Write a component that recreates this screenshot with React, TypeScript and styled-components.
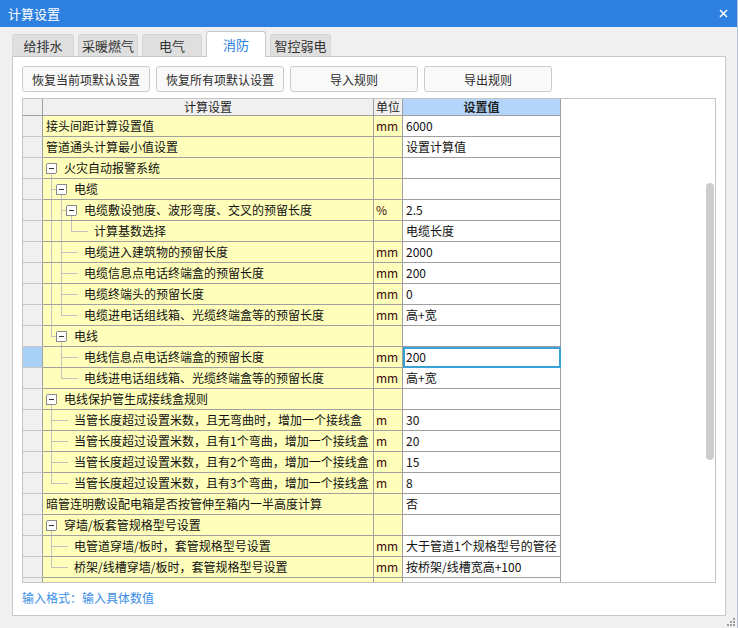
import React from 'react';
import styled, { createGlobalStyle } from 'styled-components';

const GlobalStyle = createGlobalStyle`
  html, body { margin: 0; padding: 0; background: #f0f0f0; }
  body { font-family: "Noto Sans CJK SC", "Noto Sans", sans-serif; font-size: 12px; color: #1a1a1a; }
  * { box-sizing: border-box; }
`;

type Node = {
  name: string;
  unit?: string;
  value?: string;
  plain?: boolean;
  selected?: boolean;
  children?: Node[];
};

type FlatRow = Node & {
  level: number;
  isLast: boolean;
  guides: boolean[];
  hasChildren: boolean;
};

const tree: Node[] = [
  { name: '接头间距计算设置值', unit: 'mm', value: '6000', plain: true },
  { name: '管道通头计算最小值设置', value: '设置计算值', plain: true },
  {
    name: '火灾自动报警系统',
    children: [
      {
        name: '电缆',
        children: [
          {
            name: '电缆敷设弛度、波形弯度、交叉的预留长度',
            unit: '%',
            value: '2.5',
            children: [{ name: '计算基数选择', value: '电缆长度' }],
          },
          { name: '电缆进入建筑物的预留长度', unit: 'mm', value: '2000' },
          { name: '电缆信息点电话终端盒的预留长度', unit: 'mm', value: '200' },
          { name: '电缆终端头的预留长度', unit: 'mm', value: '0' },
          { name: '电缆进电话组线箱、光缆终端盒等的预留长度', unit: 'mm', value: '高+宽' },
        ],
      },
      {
        name: '电线',
        children: [
          { name: '电线信息点电话终端盒的预留长度', unit: 'mm', value: '200', selected: true },
          { name: '电线进电话组线箱、光缆终端盒等的预留长度', unit: 'mm', value: '高+宽' },
        ],
      },
    ],
  },
  {
    name: '电线保护管生成接线盒规则',
    children: [
      { name: '当管长度超过设置米数，且无弯曲时，增加一个接线盒', unit: 'm', value: '30' },
      { name: '当管长度超过设置米数，且有1个弯曲，增加一个接线盒', unit: 'm', value: '20' },
      { name: '当管长度超过设置米数，且有2个弯曲，增加一个接线盒', unit: 'm', value: '15' },
      { name: '当管长度超过设置米数，且有3个弯曲，增加一个接线盒', unit: 'm', value: '8' },
    ],
  },
  { name: '暗管连明敷设配电箱是否按管伸至箱内一半高度计算', value: '否', plain: true },
  {
    name: '穿墙/板套管规格型号设置',
    children: [
      { name: '电管道穿墙/板时，套管规格型号设置', unit: 'mm', value: '大于管道1个规格型号的管径' },
      { name: '桥架/线槽穿墙/板时，套管规格型号设置', unit: 'mm', value: '按桥架/线槽宽高+100' },
    ],
  },
  { name: '', plain: true },
];

function flatten(nodes: Node[], level: number, guides: boolean[], out: FlatRow[]) {
  nodes.forEach((n, i) => {
    const isLast = i === nodes.length - 1;
    out.push({ ...n, level, isLast, guides: [...guides], hasChildren: !!n.children });
    if (n.children) flatten(n.children, level + 1, [...guides, !isLast], out);
  });
  return out;
}

const rows = flatten(tree, 0, [], []);

/* ---------- window chrome ---------- */

const Window = styled.div`
  width: 738px;
  height: 628px;
  overflow: hidden;
  display: flex;
  flex-direction: column;
  background: #f0f0f0;
  border-right: 1px solid #b3c3d8;
`;

const TitleBar = styled.div`
  height: 27px;
  flex: none;
  background: #2e80e0;
  color: #fff;
  display: flex;
  align-items: center;
  justify-content: space-between;
  padding: 0 9px 0 8px;
  font-size: 13px;
`;

const CloseButton = styled.span`
  display: flex;
  width: 9px;
  height: 9px;
`;

const TabStrip = styled.div`
  display: flex;
  align-items: flex-end;
  gap: 4px;
  height: 26px;
  margin-top: 4px;
  padding-left: 12px;
  flex: none;
`;

const Tab = styled.div<{ $active?: boolean; $w: number }>`
  width: ${(p) => p.$w}px;
  height: ${(p) => (p.$active ? 26 : 23)}px;
  display: flex;
  align-items: center;
  justify-content: center;
  padding-bottom: ${(p) => (p.$active ? 1 : 1)}px;
  font-size: 13px;
  border: 1px solid ${(p) => (p.$active ? '#c4c8ce' : '#d6d6d6')};
  border-bottom: none;
  border-radius: 3px 3px 0 0;
  background: ${(p) => (p.$active ? '#ffffff' : '#dfdfdf')};
  color: ${(p) => (p.$active ? '#2e80e0' : '#333')};
  position: relative;
  z-index: ${(p) => (p.$active ? 2 : 0)};
`;

const Panel = styled.div`
  position: relative;
  margin: -1px 0 0 12px;
  width: 714px;
  height: 560px;
  flex: none;
  background: #fff;
  border: 1px solid #c8c8c8;
  padding: 9px 0 0 9px;
  display: flex;
  flex-direction: column;
`;

const ButtonRow = styled.div`
  display: flex;
  gap: 6px;
  height: 26px;
`;

const ActionButton = styled.button`
  width: 128px;
  height: 26px;
  border: 1px solid #c9ccd2;
  border-radius: 3px;
  background: #f9f9f9;
  color: #2a2a2a;
  font-family: inherit;
  font-size: 12px;
  padding: 0;
  display: flex;
  align-items: center;
  justify-content: center;
`;

/* ---------- grid ---------- */

const Grid = styled.div`
  margin-top: 6px;
  width: 694px;
  height: 485px;
  border: 1px solid #c4c4c4;
  background: #fff;
  display: flex;
  overflow: hidden;
`;

const Table = styled.div`
  flex: none;
  width: 538px;
  display: flex;
  flex-direction: column;
`;

const Spacer = styled.div`
  flex: 1;
`;

const ScrollTrack = styled.div`
  flex: none;
  width: 9px;
  padding-top: 84px;
`;

const Thumb = styled.div`
  width: 8px;
  height: 277px;
  border-radius: 4px;
  background: #cdcdcd;
`;

const cols = '20px 331px 29px 158px';

const HeaderRow = styled.div`
  display: grid;
  grid-template-columns: ${cols};
  height: 17px;
  flex: none;
`;

const HeaderCell = styled.div<{ $accent?: boolean }>`
  border-right: 1px solid #a0a0a0;
  border-bottom: 1px solid #a0a0a0;
  background: ${(p) => (p.$accent ? '#b2d5f9' : '#f0f0f0')};
  font-weight: ${(p) => (p.$accent ? 700 : 400)};
  color: #1f1f1f;
  display: flex;
  align-items: center;
  justify-content: center;
  line-height: 16px;
  white-space: nowrap;
  overflow: hidden;
`;

const Row = styled.div`
  display: grid;
  grid-template-columns: ${cols};
  height: 21px;
  flex: none;
`;

const RowHead = styled.div<{ $selected?: boolean }>`
  border-right: 1px solid #a0a0a0;
  border-bottom: 1px solid #c6c6c6;
  background: ${(p) => (p.$selected ? '#a9d0f7' : '#f0f0f0')};
`;

const NameCell = styled.div`
  border-right: 1px solid #a0a0a0;
  border-bottom: 1px solid #a0a0a0;
  background: #ffffbb;
  display: flex;
  align-items: center;
  white-space: nowrap;
  overflow: hidden;
`;

const PlainPad = styled.span`
  width: 3px;
  flex: none;
`;

const NameText = styled.span`
  line-height: 20px;
  color: #111;
`;

const UnitCell = styled.div`
  border-right: 1px solid #a0a0a0;
  border-bottom: 1px solid #a0a0a0;
  background: #ffffbb;
  padding-left: 2px;
  line-height: 20px;
  color: #3c0a0a;
  white-space: nowrap;
  overflow: hidden;
`;

const ValueCell = styled.div<{ $selected?: boolean }>`
  border-right: 1px solid #a0a0a0;
  border-bottom: 1px solid #a0a0a0;
  background: #fff;
  padding-left: 3px;
  line-height: 20px;
  color: #111;
  white-space: nowrap;
  overflow: hidden;
  outline: ${(p) => (p.$selected ? '2px solid #38a2d6' : 'none')};
  outline-offset: -2px;
`;

const Footer = styled.div`
  margin-top: 7px;
  line-height: 16px;
  color: #3a8de6;
  font-size: 12px;
`;

const GripRow = styled.div`
  display: flex;
  justify-content: flex-end;
  padding: 2px 2px 0 0;
`;

/* ---------- drawings ---------- */

const LINE = '#c2c2c2';

function TreeGuide({ row }: { row: FlatRow }) {
  const L = row.level;
  const textX = 21 + 10 * L;
  const parts: React.ReactNode[] = [];
  for (let j = 1; j < L; j++) {
    if (row.guides[j]) {
      const c = 8 + 10 * (j - 1) + 0.5;
      parts.push(<line key={`g${j}`} x1={c} y1={0} x2={c} y2={20} stroke={LINE} />);
    }
  }
  if (L >= 1) {
    const pc = 8 + 10 * (L - 1) + 0.5;
    parts.push(<line key="pv" x1={pc} y1={0} x2={pc} y2={row.isLast ? 11 : 20} stroke={LINE} />);
    const end = row.hasChildren ? 3 + 10 * L : textX - 6;
    parts.push(<line key="ph" x1={pc} y1={10.5} x2={end} y2={10.5} stroke={LINE} />);
  }
  if (row.hasChildren) {
    const bx = 3 + 10 * L;
    const c = 8 + 10 * L + 0.5;
    parts.push(<line key="cv" x1={c} y1={16} x2={c} y2={20} stroke={LINE} />);
    parts.push(
      <rect key="box" x={bx + 0.5} y={5.5} width={10} height={10} rx={1.5} fill="#fff" stroke="#8a8a8a" />
    );
    parts.push(<rect key="minus" x={bx + 3} y={10} width={5} height={1} fill="#333" />);
  }
  return (
    <svg width={textX} height={20} style={{ flex: 'none' }} shapeRendering="crispEdges">
      {parts}
    </svg>
  );
}

function CloseIcon() {
  return (
    <svg width="9" height="9" viewBox="0 0 9 9">
      <path d="M1 1 L8 8 M8 1 L1 8" stroke="#fff" strokeWidth="1.5" />
    </svg>
  );
}

function Grip() {
  const dots = [
    [6, 0],
    [3, 3],
    [6, 3],
    [0, 6],
    [3, 6],
    [6, 6],
  ];
  return (
    <svg width="8" height="8" viewBox="0 0 8 8">
      {dots.map(([x, y], i) => (
        <rect key={i} x={x} y={y} width={2} height={2} fill="#a0a0a0" />
      ))}
    </svg>
  );
}

const tabs = [
  { label: '给排水', w: 62 },
  { label: '采暖燃气', w: 60 },
  { label: '电气', w: 60 },
  { label: '消防', w: 60, active: true },
  { label: '智控弱电', w: 61 },
];

const buttons = ['恢复当前项默认设置', '恢复所有项默认设置', '导入规则', '导出规则'];

export default function App() {
  return (
    <>
      <GlobalStyle />
      <Window>
        <TitleBar>
          <span>计算设置</span>
          <CloseButton>
            <CloseIcon />
          </CloseButton>
        </TitleBar>
        <TabStrip>
          {tabs.map((t) => (
            <Tab key={t.label} $w={t.w} $active={t.active}>
              {t.label}
            </Tab>
          ))}
        </TabStrip>
        <Panel>
          <ButtonRow>
            {buttons.map((b) => (
              <ActionButton key={b}>{b}</ActionButton>
            ))}
          </ButtonRow>
          <Grid>
            <Table>
              <HeaderRow>
                <HeaderCell />
                <HeaderCell>计算设置</HeaderCell>
                <HeaderCell>单位</HeaderCell>
                <HeaderCell $accent>设置值</HeaderCell>
              </HeaderRow>
              {rows.map((r, i) => (
                <Row key={i}>
                  <RowHead $selected={r.selected} />
                  <NameCell>
                    {r.plain ? <PlainPad /> : <TreeGuide row={r} />}
                    <NameText>{r.name}</NameText>
                  </NameCell>
                  <UnitCell>{r.unit}</UnitCell>
                  <ValueCell $selected={r.selected}>{r.value}</ValueCell>
                </Row>
              ))}
            </Table>
            <Spacer />
            <ScrollTrack>
              <Thumb />
            </ScrollTrack>
          </Grid>
          <Footer>输入格式：输入具体数值</Footer>
        </Panel>
        <GripRow>
          <Grip />
        </GripRow>
      </Window>
    </>
  );
}
